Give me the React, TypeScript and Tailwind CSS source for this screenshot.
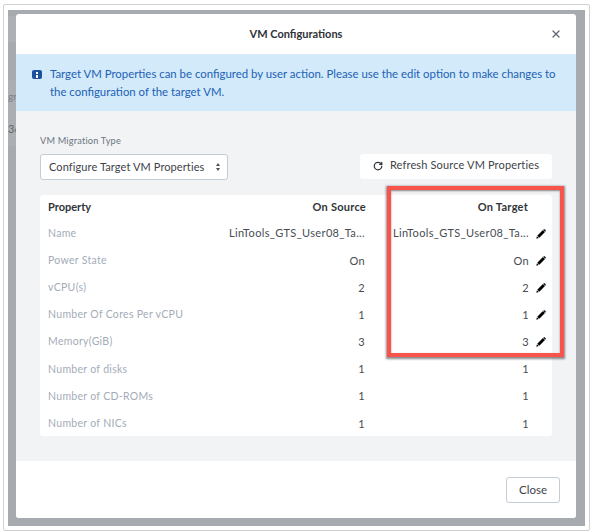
import React from "react";
import { RotateCw, X } from "lucide-react";

const rows: [string, string, string, boolean][] = [
  ["Name", "LinTools_GTS_User08_Ta...", "LinTools_GTS_User08_Ta...", true],
  ["Power State", "On", "On", true],
  ["vCPU(s)", "2", "2", true],
  ["Number Of Cores Per vCPU", "1", "1", true],
  ["Memory(GiB)", "3", "3", true],
  ["Number of disks", "1", "1", false],
  ["Number of CD-ROMs", "1", "1", false],
  ["Number of NICs", "1", "1", false],
];

function Pencil() {
  return (
    <svg viewBox="0 0 12 12" className="w-[10px] h-[10px] text-black" fill="currentColor">
      <path d="M8.3 1.2 10.8 3.7 4 10.5 1.5 8Z" />
      <path d="M1.1 8.6 3.4 10.9 0.4 11.6Z" />
      <path d="M9 0.6C9.5 0.1 10.2 0.1 10.7 0.6L11.4 1.3C11.9 1.8 11.9 2.5 11.4 3L11.2 3.2 8.8 0.8Z" />
    </svg>
  );
}

export default function App() {
  return (
    <div className="w-[598px] h-[532px] bg-white pt-[4px] pl-[3px] pr-[8px] pb-[1px] font-['Lato','Liberation_Sans',sans-serif]">
      <div className="h-full border border-[#cfd1d2] rounded-[2px] pt-[5px] pl-[4px] pr-[4px] pb-[4px]">
        <div className="relative h-full bg-[#a7abb0] overflow-hidden pt-[4px] pl-[8px] pr-[9px] pb-[8px]">
          <div className="absolute left-0 top-[6px] w-[8px] h-[26px] bg-[#adb1b6]" />
          <div className="absolute left-0 top-[70px] w-[8px] h-[66px] bg-[#abafb3]" />
          <span className="absolute left-0 top-[79px] text-[10px] text-[#7d8186]">gr</span>
          <span className="absolute left-0 top-[111px] text-[11px] text-[#63676b]">36</span>

          <div className="relative h-[504px] bg-white rounded-[3px] overflow-hidden flex flex-col">
            <div className="relative h-[40px] flex items-center justify-center shrink-0">
              <span className="text-[11px] font-bold text-[#2f3238]">VM Configurations</span>
              <X className="absolute right-[14px] top-[14px] w-[12px] h-[12px] text-[#5e6876]" strokeWidth={2.6} />
            </div>

            <div className="h-[57px] shrink-0 bg-[#d2eafa] pl-[16px] pr-[12px] pt-[11px] flex gap-[8px]">
              <div className="mt-[5px] w-[10px] h-[9px] rounded-[2px] bg-[#1b4fa0] flex flex-col items-center justify-center gap-[1px] shrink-0">
                <span className="w-[2px] h-[2px] bg-white" />
                <span className="w-[2px] h-[3px] bg-white" />
              </div>
              <p className="text-[11.4px] leading-[18px] text-[#2261b5]">
                Target VM Properties can be configured by user action. Please use the edit option to make changes to the configuration of the target VM.
              </p>
            </div>

            <div className="h-[350px] shrink-0 bg-[#f2f3f5] px-[24px] pt-[25px]">
              <div className="flex items-end justify-between h-[44px]">
                <div>
                  <div className="text-[9.2px] text-[#6a7582] leading-[10px] tracking-[0.2px] mb-[8px]">VM Migration Type</div>
                  <div className="w-[188px] h-[26px] bg-white border border-[#c4ccd6] rounded-[3px] flex items-center pl-[8px] pr-[7px] justify-between">
                    <span className="text-[11px] text-[#3d4248] tracking-[0.1px]">Configure Target VM Properties</span>
                    <span className="flex flex-col gap-[2px] items-center">
                      <span className="w-0 h-0 border-x-[2px] border-x-transparent border-b-[3px] border-b-[#4b5157]" />
                      <span className="w-0 h-0 border-x-[2px] border-x-transparent border-t-[3px] border-t-[#4b5157]" />
                    </span>
                  </div>
                </div>
                <div className="w-[192px] h-[25px] mb-[1px] bg-white rounded-[3px] flex items-center justify-center gap-[7px] pb-[2px]">
                  <RotateCw className="w-[10px] h-[10px] text-[#33383d]" strokeWidth={3} />
                  <span className="text-[11px] text-[#3d4248] tracking-[0.15px]">Refresh Source VM Properties</span>
                </div>
              </div>

              <div className="mt-[15px] h-[241px] bg-white rounded-[3px] pl-[8px]">
                <div className="h-[25px] flex items-center text-[11px] font-bold text-[#31353a]">
                  <span className="w-[170px]">Property</span>
                  <span className="w-[148px] text-right tracking-[0.25px]">On Source</span>
                  <span className="w-[162px] text-right tracking-[0.25px]">On Target</span>
                </div>
                {rows.map(([label, src, tgt, edit]) => (
                  <div key={label} className="h-[27.2px] flex items-center">
                    <span className="w-[170px] text-[10.5px] tracking-[0.3px] text-[#a3acb8]">{label}</span>
                    <span className="w-[147px] text-right text-[11px] tracking-[0.35px] text-[#484d53] whitespace-nowrap">{src}</span>
                    <span className="w-[164px] text-right text-[11px] tracking-[0.35px] text-[#484d53] whitespace-nowrap">{tgt}</span>
                    {edit && <span className="ml-[7px]"><Pencil /></span>}
                  </div>
                ))}
              </div>
            </div>

            <div className="flex-1 bg-white flex items-center justify-end pr-[16px]">
              <div className="w-[54px] h-[26px] bg-white border border-[#c4ccd6] rounded-[3px] flex items-center justify-center text-[11.5px] text-[#3d4248]">Close</div>
            </div>
          </div>

          <div className="absolute left-[379px] top-[176px] w-[177px] h-[171px] border-[4px] border-[#f9544c] shadow-[0_1px_2px_1px_rgba(60,60,60,0.6),inset_0_1px_2px_rgba(60,60,60,0.6)]" />
        </div>
      </div>
    </div>
  );
}
